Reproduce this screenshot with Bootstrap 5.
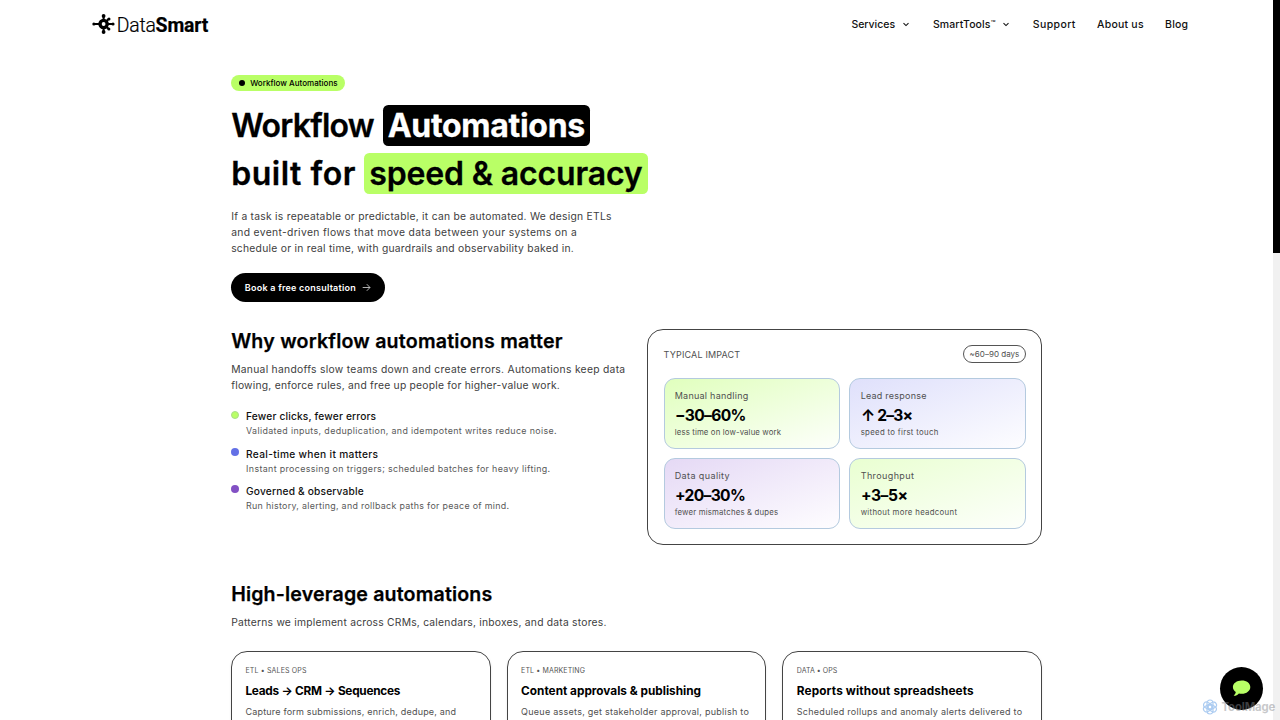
<!DOCTYPE html>
<html lang="en">
<head>
<meta charset="utf-8">
<meta name="viewport" content="width=device-width, initial-scale=1">
<title>DataSmart – Workflow Automations</title>
<link rel="stylesheet" href="https://cdn.jsdelivr.net/npm/bootstrap@5.3.0/dist/css/bootstrap.min.css">
<style>
body{font-family:Inter,"Liberation Sans",sans-serif;color:#000;height:720px;overflow:hidden;background:#fff}
.page-wrap{width:1273.3px;height:720px;overflow:hidden;white-space:nowrap}
.scroll-track{width:6.7px;height:720px;background:#f1f1f1}
.scroll-thumb{height:252.6px;background:#000}
/* header */
.topbar{height:47.3px;padding:0 85px 0 91.5px}
.brand-name{font:300 19.4px/24px Roboto,sans-serif;margin-left:2.3px;letter-spacing:-.012em;padding-top:4.4px;margin-bottom:-1px;-webkit-text-stroke:.2px #000}
.brand-name b{font-weight:700;letter-spacing:-.008em}
.topnav{font-size:10.5px;font-weight:500;line-height:16px;column-gap:21.3px;padding-top:2.4px}
.topnav .nav-link{color:#111}
.topnav .chev{margin:0 2.9px 0 7.6px}
.topnav .tm{font-size:7.6px;line-height:1;vertical-align:2.4px;letter-spacing:-.3px}
/* hero */
.content-col{width:811px;margin:0 auto;padding-top:27.7px}
.tag-pill{height:16.4px;width:114.3px;padding-left:7.7px;background:#b9ff66;font-size:8px;font-weight:500;line-height:16.4px;gap:5.3px}
.tag-dot{width:6px;height:6px;background:#000}
.hero-title{font-size:32px;font-weight:600;margin:10.2px 0 0;-webkit-text-stroke:.3px currentColor}
.hero-line{height:48px;gap:8.9px}
.hero-plain{padding-top:2px}
.hl-box{height:41px;line-height:41px;border-radius:5.3px;padding:0 4.8px}
.hl-lime{background:#b9ff66;padding:0 5.4px 0 5px;margin-left:-.6px}
.body-copy{font-size:10.3px;line-height:16px;color:#404040}
.hero-copy{margin-top:10.7px}
.cta{width:154px;height:29.4px;padding-left:13.7px;margin-top:16.7px;font-size:9px;font-weight:600;gap:6.4px}
/* sections */
.section-title{font-size:19.6px;font-weight:600;line-height:25px;margin:0;-webkit-text-stroke:.25px #000}
.section-copy{margin-top:6.4px}
.why-grid{margin-top:26.8px}
.feature-list{margin-top:15.8px;gap:6.7px}
.feature-dot{width:8px;height:8px;margin:2.4px 7.1px 0 -.2px}
.dot-lime{background:#b9ff66;border:1px solid #a9dd8c}
.dot-blue{background:#6370e6}
.dot-violet{background:#8250c4}
.feature-title{font-size:10.2px;font-weight:500;line-height:16px;color:#111}
.feature-text{font-size:8.9px;line-height:14.7px;color:#595959}
.impact{width:394.8px;height:216px;border:1px solid #444;border-radius:16px;padding:15.3px 15.2px}
.impact-head{height:18px;font-size:9px;color:#505050}
.days{width:63px;height:18px;border:1px solid #555;font-size:8px;line-height:16px;color:#505050}
.tiles{display:grid;grid-template-columns:1fr 1fr;gap:9.5px;margin-top:14.9px}
.tile{height:70.5px;border:1px solid #b4cadf;border-radius:11px;padding:10.1px 10.2px}
.tile-lime{background:linear-gradient(160deg,#e0ffbd,#fdfffb)}
.tile-lime-soft{background:linear-gradient(160deg,#e9ffd1,#fdfffb)}
.tile-blue{background:linear-gradient(160deg,#dfe0fb,#fdfdff)}
.tile-violet{background:linear-gradient(160deg,#e5d9f5,#fefdff)}
.tile-label{font-size:9px;line-height:14px;color:#505050}
.tile-value{font-size:15.6px;font-weight:700;line-height:24px;padding:1px 0 0 .3px}
.tile-sub{font-size:7.8px;line-height:9px;color:#505050;margin-top:-.5px}
/* pattern cards */
.pattern-section{padding-top:37px}
.patterns{margin-top:21.2px;gap:16px}
.pattern{flex:1;height:160px;border:1px solid #444;border-radius:16px;padding:13.3px 13.3px;box-shadow:0 1px 3px rgba(0,0,0,.08)}
.eyebrow{font-size:7px;line-height:12px;color:#555}
.pattern-title{font-size:11.8px;font-weight:700;line-height:18px;margin:5.2px 0 0}
.pattern-text{font-size:9px;line-height:16px;color:#505050;margin-top:4.1px}
/* letter spacing steps */
.ls-n50{letter-spacing:-.05em}.ls-n43{letter-spacing:-.043em}.ls-n30{letter-spacing:-.03em}.ls-n22{letter-spacing:-.0225em}
.ls-n20{letter-spacing:-.0206em}.ls-n9{letter-spacing:-.0093em}.ls-n5{letter-spacing:-.0045em}
.ls-3{letter-spacing:.0035em}.ls-7{letter-spacing:.008em}.ls-10{letter-spacing:.011em}.ls-16{letter-spacing:.0165em}
.ls-19{letter-spacing:.019em}.ls-22{letter-spacing:.022em}.ls-25{letter-spacing:.0255em}
.ls-28{letter-spacing:.0284em}.ls-31{letter-spacing:.0308em}.ls-33{letter-spacing:.0338em}.ls-36{letter-spacing:.036em}
.ls-40{letter-spacing:.0398em}.ls-43{letter-spacing:.044em}
/* floating widgets */
.chat-btn{width:43px;height:43px;left:1219.7px;top:666.5px;background:#000}
.watermark{left:1202px;top:698px;height:18px;gap:3.5px;opacity:.45;font-size:11.3px;font-weight:700;letter-spacing:-.1px;color:#85878c}
</style>
</head>
<body class="d-flex position-relative">
<div class="page-wrap flex-shrink-0">
  <header class="topbar d-flex align-items-center justify-content-between">
    <a class="d-flex align-items-center text-black text-decoration-none" href="#">
      <svg width="23" height="20" viewBox="0 0 23 20" fill="none" stroke="#000" stroke-linecap="round">
        <circle cx="11.6" cy="10" r="3.6" stroke-width="3.4"/>
        <path d="M2 10h5M16.5 10h4.5M11.6 2v4M11.6 14v4" stroke-width="2"/>
        <path d="M14.6 7l2-2M14.6 13l1.8 1.8" stroke-width="2"/>
        <g fill="#000" stroke="none"><circle cx="1.9" cy="10" r="1.6"/><circle cx="21" cy="10" r="1.6"/><circle cx="11.6" cy="2" r="1.9"/><circle cx="11.6" cy="18" r="1.9"/><circle cx="17" cy="5" r="1.5"/><circle cx="16.9" cy="14.9" r="1.5"/></g>
      </svg>
      <span class="brand-name">Data<b>Smart</b></span>
    </a>
    <nav class="topnav nav d-flex align-items-center flex-nowrap">
      <a class="nav-link p-0 d-flex align-items-center" href="#">Services<svg class="chev" width="6" height="5" viewBox="0 0 6 5" fill="none" stroke="#111" stroke-width="1.1"><path d="M.5 1.2 3 3.6 5.5 1.2"/></svg></a>
      <a class="nav-link p-0 d-flex align-items-center" href="#"><span class="ls-10">SmartTools<span class="tm">™</span></span><svg class="chev" width="6" height="5" viewBox="0 0 6 5" fill="none" stroke="#111" stroke-width="1.1"><path d="M.5 1.2 3 3.6 5.5 1.2"/></svg></a>
      <a class="nav-link p-0 ls-36" href="#">Support</a>
      <a class="nav-link p-0 ls-22" href="#">About us</a>
      <a class="nav-link p-0 ls-19" href="#">Blog</a>
    </nav>
  </header>

  <main class="content-col">
    <div class="tag-pill rounded-pill d-flex align-items-center"><span class="tag-dot rounded-circle"></span><span class="ls-3">Workflow Automations</span></div>
    <h1 class="hero-title">
      <span class="hero-line d-flex align-items-center"><span class="hero-plain ls-n22">Workflow</span><span class="hl-box bg-black text-white fw-bold ls-n9">Automations</span></span>
      <span class="hero-line d-flex align-items-center"><span class="hero-plain ls-16">built for</span><span class="hl-box hl-lime ls-n5">speed &amp; accuracy</span></span>
    </h1>
    <div class="body-copy hero-copy">
      <div class="ls-25">If a task is repeatable or predictable, it can be automated. We design ETLs</div>
      <div class="ls-33">and event-driven flows that move data between your systems on a</div>
      <div class="ls-25">schedule or in real time, with guardrails and observability baked in.</div>
    </div>
    <a class="cta bg-black text-white text-decoration-none rounded-pill d-flex align-items-center" href="#"><span class="ls-25">Book a free consultation</span><svg width="9" height="9" viewBox="0 0 9 9" fill="none" stroke="#ddd" stroke-width=".8"><path d="M.7 4.5h7.2M4.8 1.2 8 4.5 4.8 7.8"/></svg></a>

    <section class="why-grid d-flex justify-content-between">
      <div>
        <h2 class="section-title ls-10">Why workflow automations matter</h2>
        <div class="body-copy section-copy">
          <div class="ls-28">Manual handoffs slow teams down and create errors. Automations keep data</div>
          <div class="ls-22">flowing, enforce rules, and free up people for higher-value work.</div>
        </div>
        <ul class="feature-list list-unstyled d-flex flex-column mb-0">
          <li class="d-flex"><span class="feature-dot dot-lime rounded-circle"></span><div><div class="feature-title ls-16">Fewer clicks, fewer errors</div><div class="feature-text ls-40">Validated inputs, deduplication, and idempotent writes reduce noise.</div></div></li>
          <li class="d-flex"><span class="feature-dot dot-blue rounded-circle"></span><div><div class="feature-title ls-31">Real-time when it matters</div><div class="feature-text ls-40">Instant processing on triggers; scheduled batches for heavy lifting.</div></div></li>
          <li class="d-flex"><span class="feature-dot dot-violet rounded-circle"></span><div><div class="feature-title ls-16">Governed &amp; observable</div><div class="feature-text ls-33">Run history, alerting, and rollback paths for peace of mind.</div></div></li>
        </ul>
      </div>
      <div class="impact">
        <div class="impact-head d-flex align-items-center justify-content-between"><span class="ls-19">TYPICAL IMPACT</span><span class="days rounded-pill text-center ls-3">~60–90 days</span></div>
        <div class="tiles">
          <div class="tile tile-lime"><div class="tile-label ls-28">Manual handling</div><div class="tile-value ls-n43">−30–60%</div><div class="tile-sub ls-16">less time on low-value work</div></div>
          <div class="tile tile-blue"><div class="tile-label ls-25">Lead response</div><div class="tile-value ls-n50">↑ 2–3×</div><div class="tile-sub ls-40">speed to first touch</div></div>
          <div class="tile tile-violet"><div class="tile-label ls-43">Data quality</div><div class="tile-value ls-n43">+20–30%</div><div class="tile-sub ls-22">fewer mismatches &amp; dupes</div></div>
          <div class="tile tile-lime-soft"><div class="tile-label ls-43">Throughput</div><div class="tile-value ls-n30">+3–5×</div><div class="tile-sub ls-40">without more headcount</div></div>
        </div>
      </div>
    </section>

    <section class="pattern-section">
      <h2 class="section-title ls-7">High-leverage automations</h2>
      <div class="body-copy section-copy ls-22">Patterns we implement across CRMs, calendars, inboxes, and data stores.</div>
      <div class="patterns d-flex">
        <article class="pattern"><div class="eyebrow ls-22">ETL • SALES OPS</div><h3 class="pattern-title ls-n20">Leads → CRM → Sequences</h3><div class="pattern-text ls-22">Capture form submissions, enrich, dedupe, and</div></article>
        <article class="pattern"><div class="eyebrow ls-19">ETL • MARKETING</div><h3 class="pattern-title">Content approvals &amp; publishing</h3><div class="pattern-text ls-28">Queue assets, get stakeholder approval, publish to</div></article>
        <article class="pattern"><div class="eyebrow ls-7">DATA • OPS</div><h3 class="pattern-title ls-10">Reports without spreadsheets</h3><div class="pattern-text ls-31">Scheduled rollups and anomaly alerts delivered to</div></article>
      </div>
    </section>
  </main>
</div>
<div class="scroll-track flex-shrink-0"><div class="scroll-thumb"></div></div>

<button class="chat-btn position-absolute rounded-circle border-0 p-0 d-flex align-items-center justify-content-center" aria-label="Chat">
  <svg width="19" height="17" viewBox="0 0 19 17" fill="#b9ff66"><path d="M9.7.4C4.8.4.9 3.200.9 7c0 2 1.100 3.900 2.900 5.100-.2 1.300-1 2.600-2.100 3.700 2 .1 3.900-.7 5.200-2.300.9.2 1.800.3 2.800.3 4.900 0 8.600-3.100 8.600-6.900S14.600.4 9.700.4z"/></svg>
</button>
<div class="watermark position-absolute d-flex align-items-center">
  <svg width="16" height="16" viewBox="0 0 16 16" fill="none" stroke="#4a90e2" stroke-width="1.2"><rect x="5" y="1" width="6" height="9" rx="3"/><rect x="5" y="1" width="6" height="9" rx="3" transform="rotate(60 8 8)"/><rect x="5" y="1" width="6" height="9" rx="3" transform="rotate(120 8 8)"/><rect x="5" y="1" width="6" height="9" rx="3" transform="rotate(180 8 8)"/><rect x="5" y="1" width="6" height="9" rx="3" transform="rotate(240 8 8)"/><rect x="5" y="1" width="6" height="9" rx="3" transform="rotate(300 8 8)"/></svg>
  <span>ToolMage</span>
</div>
<script src="https://cdn.jsdelivr.net/npm/bootstrap@5.3.0/dist/js/bootstrap.bundle.min.js"></script>
</body>
</html>
